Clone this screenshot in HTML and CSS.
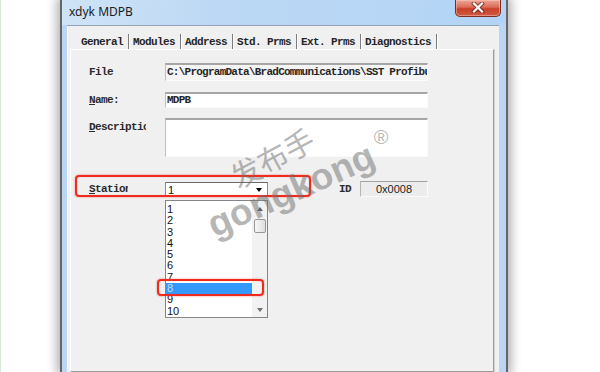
FILE: index.html
```html
<!DOCTYPE html>
<html>
<head>
<meta charset="utf-8">
<link rel="stylesheet" href="styles.css">
</head>
<body>
<div class="desk">
  <div class="window">
    <div class="titlebar">
      <span class="title">xdyk MDPB</span>
      <div class="close">
        <svg width="14" height="11" viewBox="0 0 14 11">
          <path d="M3 1.5 L11 9.5 M11 1.5 L3 9.5" stroke="#5a1810" stroke-width="4" stroke-linecap="square" fill="none" opacity="0.7"/>
          <path d="M3 1.5 L11 9.5 M11 1.5 L3 9.5" stroke="#ffffff" stroke-width="2.2" stroke-linecap="square" fill="none"/>
        </svg>
      </div>
    </div>
    <div class="client">
      <div class="tabs">
        <span class="tab">General</span>
        <span class="tab">Modules</span>
        <span class="tab">Address</span>
        <span class="tab">Std. Prms</span>
        <span class="tab">Ext. Prms</span>
        <span class="tab">Diagnostics</span>
      </div>
      <div class="panel">
        <div class="row row-file">
          <span class="lbl">File</span>
          <div class="field ro">C:\ProgramData\BradCommunications\SST Profibus</div>
        </div>
        <div class="row row-name">
          <span class="lbl"><u>N</u>ame:</span>
          <div class="field">MDPB</div>
        </div>
        <div class="row row-desc">
          <span class="lbl"><span class="clip clip-desc"><u>D</u>escription</span></span>
          <div class="field"></div>
        </div>
        <div class="row row-station">
          <span class="lbl"><span class="clip clip-stat"><u>S</u>tation</span></span>
          <div class="station">
            <div class="combo">
              <span class="combo-val">1</span>
              <span class="tri-down"></span>
              <div class="dropdown">
                <div class="items">
                  <div class="item">1</div>
                  <div class="item">2</div>
                  <div class="item">3</div>
                  <div class="item">4</div>
                  <div class="item">5</div>
                  <div class="item">6</div>
                  <div class="item">7</div>
                  <div class="item hl">8</div>
                  <div class="item">9</div>
                  <div class="item">10</div>
                </div>
                <div class="scrollbar">
                  <div class="sb-btn"><span class="tri-up"></span></div>
                  <div class="thumb"></div>
                  <div class="sb-fill"></div>
                  <div class="sb-btn"><span class="tri-down small"></span></div>
                </div>
              </div>
            </div>
            <div class="id-group">
              <span class="id-lbl">ID</span>
              <div class="id-field">0x0008</div>
            </div>
          </div>
        </div>
      </div>
    </div>
  </div>

  <div class="annot annot-station"></div>
  <div class="annot annot-item"></div>

  <div class="wm wm-cn">发布手</div>
  <div class="wm wm-en">gongkong</div>
  <div class="wm wm-reg">®</div>
</div>
</body>
</html>
```

FILE: styles.css
```css
* { box-sizing: border-box; }
html, body { margin: 0; padding: 0; }
body {
  width: 600px;
  height: 372px;
  overflow: hidden;
  background: #fff;
  font-family: "Liberation Mono", monospace;
}
.desk {
  position: relative;
  width: 600px;
  height: 372px;
  display: flex;
  box-shadow: inset 1px 0 0 #d6ecd6;
}

/* window */
.window {
  margin-left: 60px;
  width: 448px;
  height: 372px;
  border-left: 2px solid #666;
  border-right: 2px solid #666;
  padding: 0 7px 0 5px;
  background: #b9d6f4;
  box-shadow: 0 0 10px 3px rgba(0,0,0,0.32);
  display: flex;
  flex-direction: column;
}
.titlebar {
  height: 25px;
  margin: 0 -7px 0 -5px;
  padding-left: 7px;
  display: flex;
  align-items: flex-start;
  justify-content: space-between;
  background: linear-gradient(100deg, #d0e4f7 0%, #bcd8f4 35%, #b3d4f6 100%);
}
.title {
  font-family: "Noto Sans", sans-serif;
  font-size: 12px;
  line-height: 24px;
  color: #1c1c1c;
}
.close {
  width: 46px;
  height: 17px;
  margin-right: 5px;
  border: 1px solid #7e2c20;
  border-top: none;
  border-radius: 0 0 5px 5px;
  background: linear-gradient(#eba898 0%, #dc6a55 45%, #c9402a 55%, #d05a42 100%);
  box-shadow: inset 0 0 0 1px rgba(255,210,200,0.45);
  display: flex;
  align-items: center;
  justify-content: center;
  padding-bottom: 2px;
}

/* client */
.client {
  flex: 1;
  background: #f0f0f0;
  border-top: 1px solid #93a3b4;
  box-shadow: inset 1px 0 0 #fafafa;
  display: flex;
  flex-direction: column;
}
.tabs {
  display: flex;
  height: 23px;
  padding: 8px 0 0 10px;
}
.tab {
  height: 15px;
  padding: 0 5px 0 4px;
  border-right: 1px solid #7c7c7c;
  box-shadow: 1px 0 0 #fff;
  font-weight: bold;
  font-size: 11px;
  line-height: 16px;
  letter-spacing: -0.6px;
  color: #262626;
  white-space: nowrap;
}

.panel {
  position: relative;
  flex: 1;
  margin: 0 5px 0 3px;
  border-top: 1px solid #fff;
  border-left: 1px solid #fff;
  border-right: 1px solid #9c9c9c;
  border-bottom: 1px solid #9c9c9c;
  box-shadow: 1px 0 0 #d2d2d2;
  padding: 13px 0 0 18px;
  display: flex;
  flex-direction: column;
}
.row {
  display: flex;
  align-items: center;
}
.row-file { height: 18px; }
.row-name { height: 16px; margin-top: 11px; }
.row-desc { height: 39px; margin-top: 10px; align-items: flex-start; }
.row-station { height: 16px; margin-top: 24px; }

.lbl {
  flex: none;
  width: 76px;
  font-weight: bold;
  font-size: 11px;
  line-height: 12px;
  letter-spacing: -0.6px;
  color: #2c2c2c;
  white-space: nowrap;
}
.row-desc .lbl { padding-top: 3px; }
.clip { display: inline-block; overflow: hidden; vertical-align: top; }
.clip-desc { width: 57px; }
.clip-stat { width: 39px; }

.field {
  width: 263px;
  height: 100%;
  background: #fff;
  border-top: 2px solid #a6a6a6;
  border-left: 1px solid #bdbdbd;
  border-right: 1px solid #fbfbfb;
  border-bottom: 1px solid #fbfbfb;
  padding-left: 1px;
  font-weight: bold;
  font-size: 11px;
  line-height: 13px;
  letter-spacing: -0.75px;
  color: #262626;
  white-space: nowrap;
  overflow: hidden;
}
.row-file .field { line-height: 15px; }
.field.ro { background: #f4f4f4; }

/* station row */
.station {
  width: 263px;
  height: 16px;
  display: flex;
  justify-content: space-between;
  align-items: flex-start;
}
.combo {
  position: relative;
  width: 103px;
  height: 15px;
  margin-top: 1px;
  background: #fff;
  border: 1px solid #8c8c8c;
  border-top-color: #6c6c6c;
  display: flex;
  align-items: center;
  justify-content: space-between;
  padding: 0 5px 0 2px;
  font-family: "Liberation Sans", sans-serif;
  font-size: 11px;
  color: #111;
}
.tri-down {
  width: 0;
  height: 0;
  border-left: 3.5px solid transparent;
  border-right: 3.5px solid transparent;
  border-top: 4px solid #000;
}
.tri-down.small { border-top-color: #707070; }
.tri-up {
  width: 0;
  height: 0;
  border-left: 3px solid transparent;
  border-right: 3px solid transparent;
  border-bottom: 4px solid #606060;
}
.dropdown {
  position: absolute;
  left: -1px;
  top: 17px;
  width: 103px;
  height: 118px;
  background: #fff;
  border: 1px solid #858585;
  display: flex;
}
.items {
  flex: 1;
  padding-top: 3px;
  font-family: "Liberation Sans", sans-serif;
  font-size: 11px;
  color: #111;
}
.item {
  height: 11.3px;
  line-height: 11.3px;
  padding-left: 1px;
}
.item.hl {
  background: #3399ff;
  color: #c8defc;
}
.scrollbar {
  width: 15px;
  background: #f2f2f2;
  display: flex;
  flex-direction: column;
}
.sb-btn {
  height: 15px;
  display: flex;
  align-items: center;
  justify-content: center;
}
.thumb {
  height: 14px;
  margin: 3px 1px 0 2px;
  border: 1px solid #989898;
  border-radius: 2px;
  background: linear-gradient(to right, #f7f7f7, #dedede);
}
.sb-fill { flex: 1; }

.id-group {
  display: flex;
  align-items: center;
  gap: 9px;
}
.id-lbl {
  font-weight: bold;
  font-size: 11px;
  letter-spacing: -0.6px;
  color: #2c2c2c;
}
.id-field {
  width: 68px;
  height: 16px;
  background: #ececec;
  border-top: 1px solid #a4a4a4;
  border-left: 1px solid #b4b4b4;
  border-right: 1px solid #fafafa;
  border-bottom: 1px solid #fafafa;
  text-align: center;
  font-family: "Liberation Sans", sans-serif;
  font-size: 11px;
  line-height: 14px;
  color: #222;
}

/* annotations */
.annot {
  position: absolute;
  border: 2px solid #ef2a1e;
  border-radius: 4px;
  box-shadow: 0 0 2px rgba(240,40,30,0.6), inset 0 0 1px rgba(240,40,30,0.5);
}
.annot-station { left: 75px; top: 175px; width: 236px; height: 22px; }
.annot-item { left: 157px; top: 279px; width: 107px; height: 17px; }

/* watermark */
.wm {
  position: absolute;
  color: rgba(110,110,110,0.5);
  white-space: nowrap;
  line-height: 1;
}
.wm-cn {
  left: 272px;
  top: 157px;
  font-family: "Noto Sans CJK SC", sans-serif;
  font-size: 30px;
  transform: translate(-50%, -50%) rotate(-28deg);
}
.wm-en {
  left: 291px;
  top: 190px;
  font-family: "Liberation Sans", sans-serif;
  font-weight: bold;
  font-size: 37px;
  transform: translate(-50%, -50%) rotate(-24deg);
}
.wm-reg {
  left: 381px;
  top: 137px;
  font-family: "Liberation Sans", sans-serif;
  font-size: 20px;
  transform: translate(-50%, -50%);
}
```
